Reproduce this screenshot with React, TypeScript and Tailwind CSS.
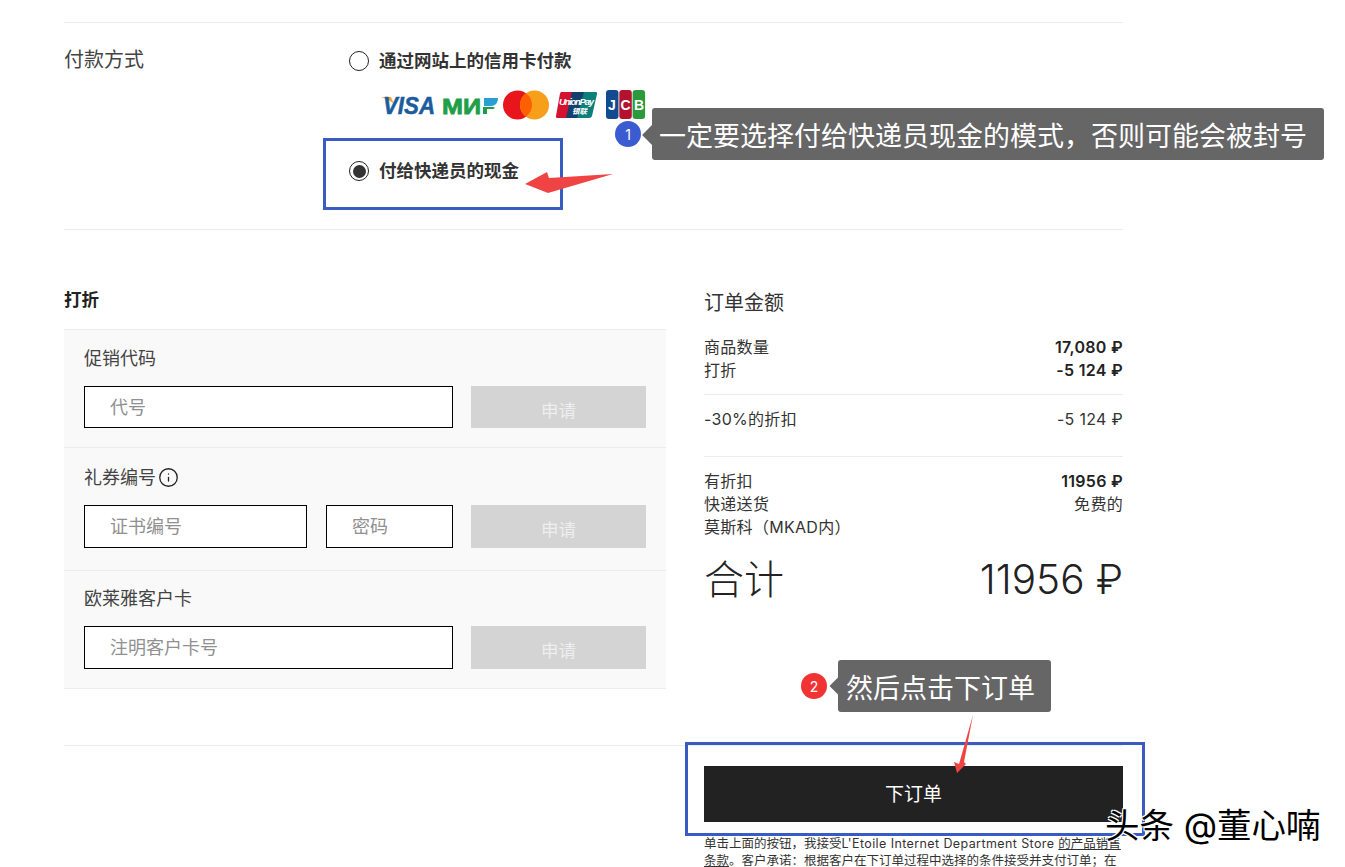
import React from 'react';
import { Info } from 'lucide-react';

const fontStack = "font-['Inter','Noto_Sans_CJK_SC',sans-serif]";

const Logos: React.FC = () => (
    <div className="flex items-center h-[30px] ml-[30px] mt-[17px]">
        <svg width="268" height="30" viewBox="0 0 268 30">
            {/* visa */}
            <path d="M2 7 L12 7 L15 14 C12 11 7 8.5 2 7Z" fill="#f2a33a" />
            <text x="4" y="24" fontFamily="Liberation Sans" fontWeight="700" fontStyle="italic" fontSize="24" fill="#1a5c9e" stroke="#1a5c9e" strokeWidth="0.5" textLength="52" lengthAdjust="spacingAndGlyphs">VISA</text>
            {/* mir */}
            <text x="63" y="24" fontFamily="Liberation Sans" fontWeight="700" fontSize="22" fill="#1f9e4a" stroke="#1f9e4a" strokeWidth="0.8" textLength="39" lengthAdjust="spacingAndGlyphs">МИ</text>
            <path d="M105 8 H119 C119 13 116 16 112 16 H105Z" fill="#2a9fd6" />
            <path d="M104 17 H113 C116 17 117 18 114 19 H108 V24 H104Z" fill="#1f9e4a" />
            {/* mastercard */}
            <circle cx="138.5" cy="15" r="14.5" fill="#e8151d" />
            <circle cx="155.5" cy="15" r="14.5" fill="#f79e1b" />
            <path d="M147 3.25 A14.5 14.5 0 0 1 147 26.75 A14.5 14.5 0 0 1 147 3.25Z" fill="#ff5f00" />
            {/* unionpay */}
            <path d="M182 2 H198 L192 28 H179 Q176.5 28 177 26 L181 3.5Z" fill="#d5122e" />
            <path d="M193 2 H210 L204 28 H187Z" fill="#13406f" />
            <path d="M205 2 H217 Q218.5 2 218 4 L213 26 Q212.5 28 210 28 H198Z" fill="#0c7f7a" />
            <text x="180" y="15" fontFamily="Liberation Sans" fontWeight="700" fontStyle="italic" fontSize="9.5" fill="#ffffff" textLength="35">UnionPay</text>
            <text x="193" y="24" fontFamily="Noto Sans CJK SC" fontWeight="700" fontStyle="italic" fontSize="7.5" fill="#ffffff">银联</text>
            {/* jcb */}
            <rect x="227" y="0" width="12.5" height="29" rx="3" fill="#124a8f" />
            <rect x="240.3" y="0" width="12.5" height="29" rx="3" fill="#b3132f" />
            <rect x="253.6" y="0" width="12.5" height="29" rx="3" fill="#2c9a3c" />
            <text x="229" y="20" fontFamily="Liberation Sans" fontWeight="700" fontSize="14" fill="#ffffff">J</text>
            <text x="241.5" y="20" fontFamily="Liberation Sans" fontWeight="700" fontSize="14" fill="#ffffff">C</text>
            <text x="255" y="20" fontFamily="Liberation Sans" fontWeight="700" fontSize="14" fill="#ffffff">B</text>
        </svg>
    </div>
);

const Radio: React.FC<{ label: string; checked?: boolean }> = ({ label, checked }) => (
    <div className="flex items-center gap-[10px] h-[24px]">
        <span className="flex items-center justify-center w-[20px] h-[20px] rounded-full border border-[#222] bg-white">
            {checked && <span className="w-[13px] h-[13px] rounded-full bg-[#333]" />}
        </span>
        <span className="text-[17.5px] font-bold text-[#333] leading-none">{label}</span>
    </div>
);

const ApplyButton: React.FC<{ h?: string }> = ({ h = 'h-[42px]' }) => (
    <button className={`w-[175px] ${h} ml-[18px] bg-[#d4d4d4] text-[#eeeeee] text-[17.5px] pt-[8px]`}>申请</button>
);

const Field: React.FC<{ placeholder: string; w: string; h?: string }> = ({ placeholder, w, h = 'h-[42px]' }) => (
    <div className={`${w} ${h} flex items-center pl-[25px] border border-black bg-white text-[18px] text-[#909090]`}>
        {placeholder}
    </div>
);

const Row: React.FC<{ left: string; right: string; bold?: boolean }> = ({ left, right, bold }) => (
    <div className="flex justify-between h-[23px] items-center text-[16px] tracking-[0.3px] text-[#333]">
        <span>{left}</span>
        <span className={bold ? 'font-semibold text-[#222]' : ''}>{right}</span>
    </div>
);

const App: React.FC = () => {
    return (
        <div className={`relative w-[1345px] h-[867px] overflow-hidden bg-white pl-[64px] pt-[22px] ${fontStack}`}>
            <div className="w-[1059px]">
                {/* payment */}
                <section className="flex h-[208px] border-y border-[#ececec]">
                    <div className="w-[285px] pt-[22px] text-[20px] leading-[30px] text-[#444]">付款方式</div>
                    <div className="pt-[26px]">
                        <Radio label="通过网站上的信用卡付款" />
                        <Logos />
                        <div className="mt-[39px]">
                            <Radio label="付给快递员的现金" checked />
                        </div>
                    </div>
                </section>

                <div className="flex h-[515px]">
                    {/* discounts */}
                    <div className="w-[602px] pt-[58px]">
                        <h2 className="h-[41px] text-[17.5px] leading-[24px] font-bold text-[#222]">打折</h2>
                        <div className="bg-[#f9f9f9] border-t border-[#ececec]">
                            <div className="h-[118px] px-[20px] pt-[14px] border-b border-[#ececec]">
                                <div className="h-[42px] text-[18px] leading-[30px] text-[#444]">促销代码</div>
                                <div className="flex">
                                    <Field placeholder="代号" w="w-[369px]" />
                                    <ApplyButton />
                                </div>
                            </div>
                            <div className="h-[123px] px-[20px] pt-[14px] border-b border-[#ececec]">
                                <div className="flex items-center gap-[2px] h-[43px] pb-[13px] text-[18px] text-[#444]">
                                    礼券编号
                                    <Info size={21} strokeWidth={1.5} className="text-[#222]" />
                                </div>
                                <div className="flex">
                                    <Field placeholder="证书编号" w="w-[223px]" h="h-[43px]" />
                                    <div className="ml-[19px]">
                                        <Field placeholder="密码" w="w-[127px]" h="h-[43px]" />
                                    </div>
                                    <ApplyButton h="h-[43px]" />
                                </div>
                            </div>
                            <div className="h-[118px] px-[20px] pt-[13px] border-b border-[#ececec]">
                                <div className="h-[42px] text-[18px] leading-[30px] text-[#444]">欧莱雅客户卡</div>
                                <div className="flex">
                                    <Field placeholder="注明客户卡号" w="w-[369px]" h="h-[43px]" />
                                    <ApplyButton h="h-[43px]" />
                                </div>
                            </div>
                        </div>
                    </div>

                    {/* order total */}
                    <div className="w-[419px] ml-[38px] pt-[58px]">
                        <h2 className="h-[47px] text-[20px] leading-[30px] text-[#333]">订单金额</h2>
                        <Row left="商品数量" right="17,080 ₽" bold />
                        <Row left="打折" right="-5 124 ₽" bold />
                        <div className="h-[62px] mt-[13px] flex justify-between items-center border-t border-[#ececec] text-[16px] tracking-[0.3px] text-[#333] pb-[14px]">
                            <span>-30%的折扣</span>
                            <span>-5 124 ₽</span>
                        </div>
                        <div className="border-t border-[#ececec] pt-[12px]">
                            <Row left="有折扣" right="11956 ₽" bold />
                            <Row left="快递送货" right="免费的" />
                            <Row left="莫斯科（MKAD内）" right="" />
                        </div>
                        <div className="flex justify-between items-center h-[60px] mt-[12px] text-[#222] font-light">
                            <span className="text-[40px]">合计</span>
                            <span className="text-[40.5px]">11956 ₽</span>
                        </div>
                    </div>
                </div>

                <div className="flex border-t border-[#ececec] h-[122px] pt-[20px]">
                    <div className="w-[419px] ml-[640px]">
                        <button className="w-full h-[56px] pt-[2px] bg-[#222222] text-white text-[19px]">下订单</button>
                        <p className="mt-[13px] text-[12.5px] leading-[17px] text-[#333]">
                            单击上面的按钮，我接受<span className="tracking-[0.4px]">L'Etoile Internet Department Store </span><span className="underline">的产品销售条款</span>。客户承诺：根据客户在下订单过程中选择的条件接受并支付订单；在
                        </p>
                    </div>
                </div>
            </div>

            {/* annotations */}
            <div className="absolute left-[323px] top-[138px] w-[240px] h-[72px] border-[3px] border-[#3b5bc4]" />
            <svg className="absolute left-[520px] top-[165px]" width="100" height="35" viewBox="0 0 100 35">
                <polygon points="5,19 27,7 29,13 93,9 28,28" fill="#f04444" />
            </svg>
            <div className="absolute left-[615px] top-[121px] w-[26px] h-[26px] rounded-full bg-[#3b5bd0] text-white text-[14px] flex items-center justify-center">1</div>
            <div className="absolute left-[645px] top-[128px] w-[14px] h-[14px] rotate-45 bg-[#666]" />
            <div className="absolute left-[652px] top-[108px] w-[672px] h-[52px] rounded-[3px] bg-[#666] text-white text-[27px] leading-[58px] pl-[7px] whitespace-nowrap">一定要选择付给快递员现金的模式，否则可能会被封号</div>

            <div className="absolute left-[801px] top-[673px] w-[26px] h-[26px] rounded-full bg-[#f23333] text-white text-[14px] flex items-center justify-center">2</div>
            <div className="absolute left-[832px] top-[680px] w-[12px] h-[12px] rotate-45 bg-[#666]" />
            <div className="absolute left-[838px] top-[660px] w-[213px] h-[52px] rounded-[3px] bg-[#666] text-white text-[27px] leading-[58px] pl-[8px] whitespace-nowrap">然后点击下订单</div>
            <div className="absolute left-[685px] top-[742px] w-[460px] h-[94px] border-[3px] border-[#3b5bc4]" />
            <svg className="absolute left-[950px] top-[712px]" width="30" height="65" viewBox="0 0 30 65">
                <polygon points="23,3 14,50 16,52 7,61 4,50 9,52" fill="#f04444" />
            </svg>

            <div className="absolute left-[1105px] top-[804px] text-[34.5px] leading-[44px] text-black whitespace-nowrap [text-shadow:1px_1px_0_#fff,-1px_-1px_0_#fff,1px_-1px_0_#fff,-1px_1px_0_#fff]">头条 @董心喃</div>
        </div>
    );
};

export default App;
